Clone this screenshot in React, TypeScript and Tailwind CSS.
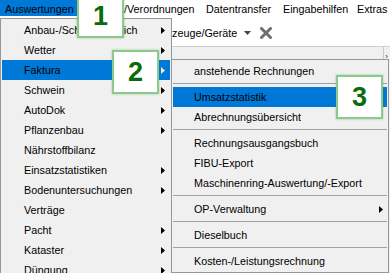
import React from "react";

type MainItem = { label: string; sub?: boolean; active?: boolean };
type SubItem = { sep: true } | { label: string; sub?: boolean; active?: boolean; sep?: false };

const mainItems: MainItem[] = [
  { label: "Anbau-/Schlagvergleich", sub: true },
  { label: "Wetter", sub: true },
  { label: "Faktura", sub: true, active: true },
  { label: "Schwein", sub: true },
  { label: "AutoDok", sub: true },
  { label: "Pflanzenbau", sub: true },
  { label: "Nährstoffbilanz" },
  { label: "Einsatzstatistiken", sub: true },
  { label: "Bodenuntersuchungen", sub: true },
  { label: "Verträge" },
  { label: "Pacht", sub: true },
  { label: "Kataster", sub: true },
  { label: "Düngung", sub: true },
];

const subItems: SubItem[] = [
  { label: "anstehende Rechnungen" },
  { sep: true },
  { label: "Umsatzstatistik", active: true },
  { label: "Abrechnungsübersicht" },
  { sep: true },
  { label: "Rechnungsausgangsbuch" },
  { label: "FIBU-Export" },
  { label: "Maschinenring-Auswertung/-Export" },
  { sep: true },
  { label: "OP-Verwaltung", sub: true },
  { sep: true },
  { label: "Dieselbuch" },
  { sep: true },
  { label: "Kosten-/Leistungsrechnung" },
];

function Arrow({ light }: { light?: boolean }) {
  return (
    <svg width="4" height="7" viewBox="0 0 4 7" className="shrink-0">
      <path d="M0 0 L4 3.5 L0 7 Z" fill={light ? "#e8e8e8" : "#000000"} />
    </svg>
  );
}

function Callout({ n, className }: { n: string; className: string }) {
  return (
    <div
      className={`absolute flex h-[44px] w-[47px] items-center justify-center border-2 border-[#8cc98c] bg-white shadow-[0_0_2px_rgba(60,140,60,0.45)] ${className}`}
    >
      <span className="text-[27px] font-bold leading-none text-[#0b6a0b]">{n}</span>
    </div>
  );
}

export default function App() {
  return (
    <div className="relative flex h-[273px] w-[390px] flex-col overflow-hidden bg-white font-['Liberation_Sans',Arial,sans-serif] text-[10.75px] text-black">
      {/* Menu bar */}
      <div className="flex h-[16px] shrink-0 items-stretch leading-[18px]">
        <div className="w-[77px] bg-[#0078d7] pl-[5px]">Auswertungen</div>
        <div className="w-[124px] overflow-hidden whitespace-nowrap pl-[7px]">Gesetze/Verordnungen</div>
        <div className="w-[77px] pl-[5px]">Datentransfer</div>
        <div className="w-[74px] pl-[5px]">Eingabehilfen</div>
        <div className="pl-[5px]">Extras</div>
      </div>

      {/* Toolbar */}
      <div className="flex h-[30px] shrink-0 items-center pt-[4px]">
        <div className="w-[150px] shrink-0" />
        <span className="whitespace-nowrap">Fahrzeuge/Geräte</span>
        <svg width="7" height="4" viewBox="0 0 7 4" className="ml-[7px] shrink-0">
          <path d="M0 0 L7 0 L3.5 4 Z" fill="#444444" />
        </svg>
        <svg width="12" height="12" viewBox="0 0 12 12" className="ml-[9px] shrink-0">
          <path d="M1.5 1.5 L10.5 10.5 M10.5 1.5 L1.5 10.5" stroke="#6e6e6e" strokeWidth="3" strokeLinecap="round" />
        </svg>
      </div>

      {/* Body */}
      <div className="relative flex-1 border-t border-[#cfcfcf] bg-[#f0f0f0]">
        <div className="absolute right-[6px] top-0 h-[12px] w-px bg-[#c8c8c8]" />
        <div className="absolute right-[2px] top-[6px] text-[8px] leading-none text-[#333]">›</div>
      </div>

      {/* Main drop-down */}
      <div className="absolute left-0 top-[18px] w-[172px] border border-[#979797] bg-[#f0f0f0] px-[1px] pt-[1px]">
        {mainItems.map((it) => (
          <div
            key={it.label}
            className={`flex h-[20px] items-center pl-[22px] pr-[5px] leading-[20px] ${it.active ? "bg-[#0078d7]" : ""}`}
          >
            <span className="flex-1 whitespace-nowrap">{it.label}</span>
            {it.sub ? <Arrow light={it.active} /> : null}
          </div>
        ))}
      </div>

      {/* Submenu */}
      <div className="absolute left-[171px] top-[59px] w-[218px] border border-[#979797] bg-[#f0f0f0] px-[1px] py-[1px]">
        {subItems.map((it, i) =>
          "label" in it ? (
            <div
              key={i}
              className={`flex h-[20px] items-center pl-[21px] pr-[4px] leading-[20px] ${it.active ? "bg-[#0078d7]" : ""}`}
            >
              <span className="flex-1 whitespace-nowrap">{it.label}</span>
              {it.sub ? <Arrow /> : null}
            </div>
          ) : (
            <div key={i} className="h-[6px] pt-[2px]">
              <div className="h-px bg-[#a0a0a0]" />
            </div>
          )
        )}
      </div>

      {/* Callouts */}
      <Callout n="1" className="left-[77px] top-[-6px]" />
      <Callout n="2" className="left-[112px] top-[50px]" />
      <Callout n="3" className="left-[336px] top-[75px]" />
    </div>
  );
}
